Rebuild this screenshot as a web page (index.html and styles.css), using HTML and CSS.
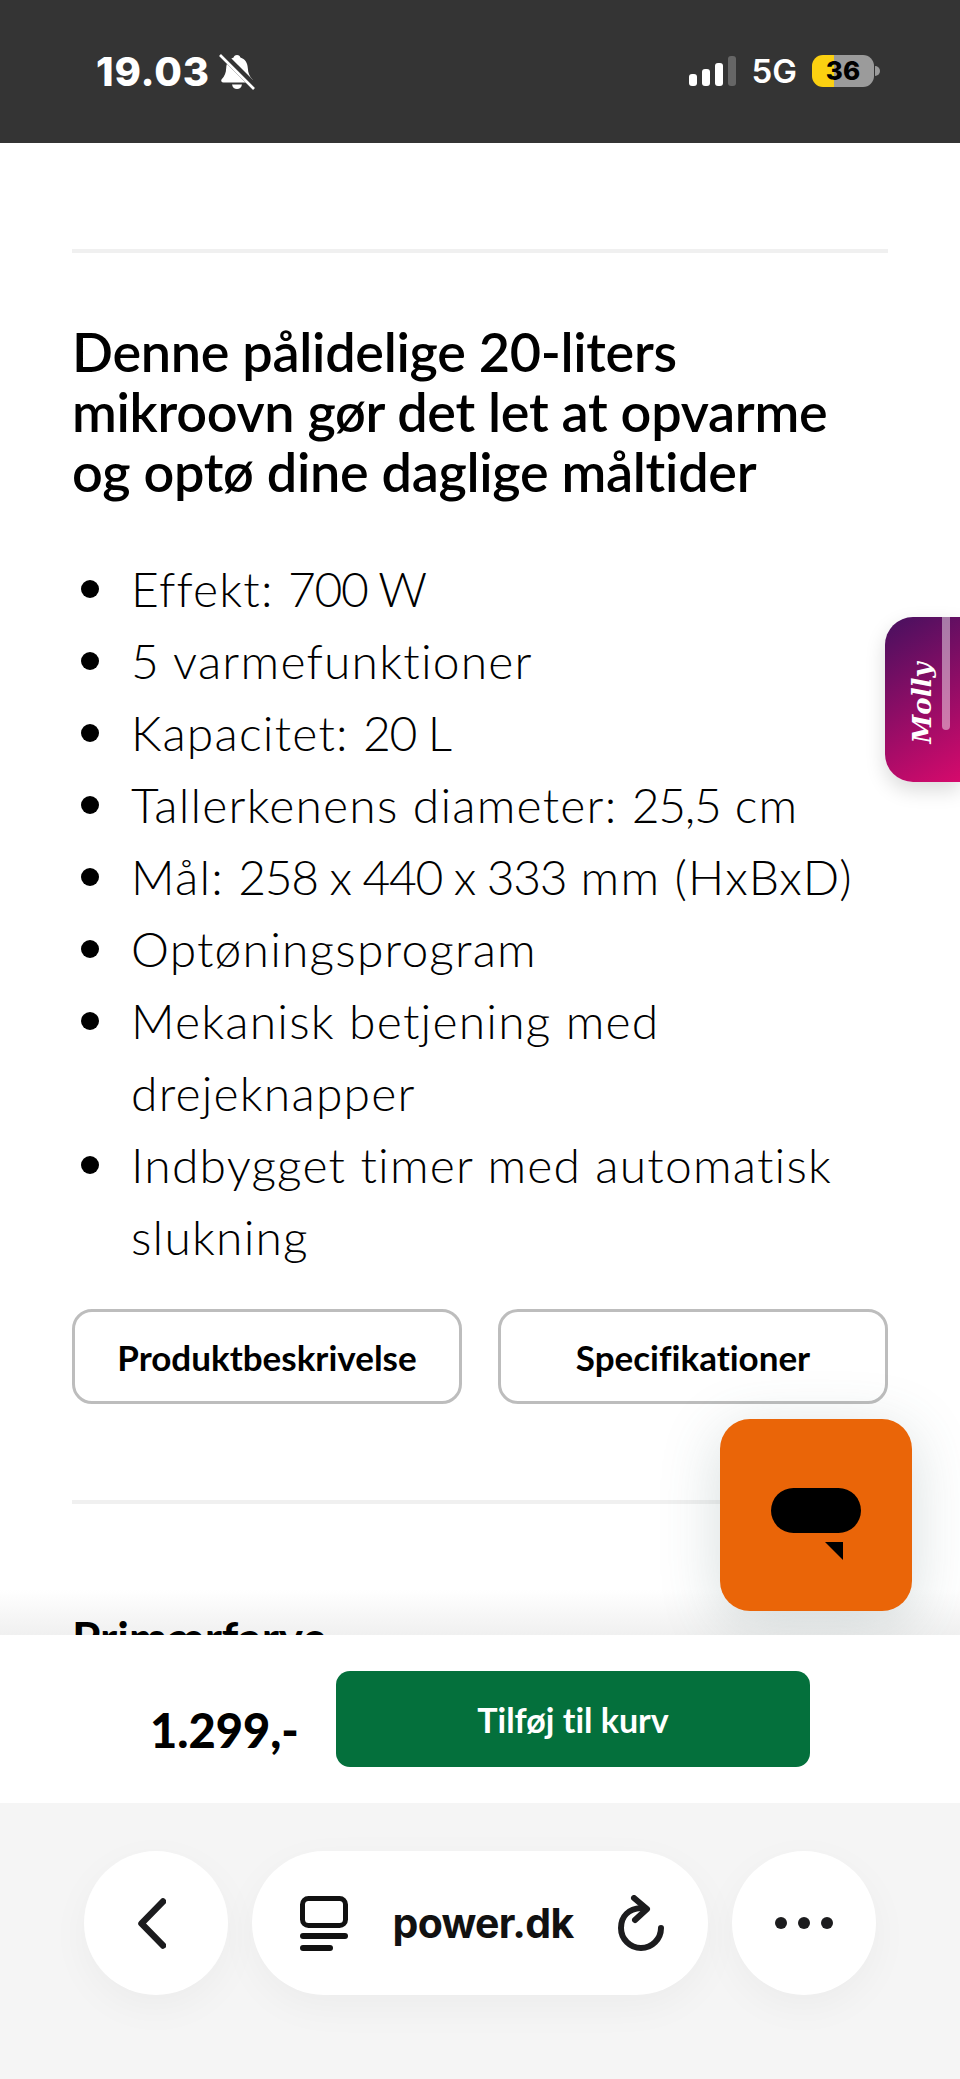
FILE: index.html
```html
<!DOCTYPE html>
<html lang="da">
	<head>
		<meta charset="utf-8">
		<title>Mikroovn - power.dk</title>
		<meta name="viewport" content="width=device-width, initial-scale=1.0">
		<link rel="stylesheet" href="styles.css">
	</head>
	<body>
		<header class="status">
			<div class="status-left">
				<span class="time">19.03</span>
				<svg class="bell" viewBox="0 0 36 36" width="36" height="36">
					<path d="M18 1c2 0 3 1 3.400 2.600C26 5 28.500 9 28.800 14c.3 5 1.500 8 4.700 11.500.8 1.500 0 3-2 3H4.500c-2 0-2.800-1.500-2-3C5.700 22 7 19 7.200 14 7.500 9 10 5 14.600 3.600 15 2 16 1 18 1z" fill="#fff"/>
					<path d="M13 30.500h10c-.5 3-2.500 4.500-5 4.500s-4.500-1.500-5-4.500z" fill="#fff"/>
					<path d="M3 0l33 33" stroke="#343434" stroke-width="7"/>
					<path d="M1 1l34 34" stroke="#fff" stroke-width="2.600"/>
				</svg>
			</div>
			<div class="status-right">
				<div class="signal">
					<i class="bar bar1"></i>
					<i class="bar bar2"></i>
					<i class="bar bar3"></i>
					<i class="bar bar4"></i>
				</div>
				<span class="net">5G</span>
				<div class="battery"><span>36</span></div>
				<i class="battery-cap"></i>
			</div>
		</header>

		<main class="content">
			<hr class="rule rule-top">
			<h2 class="title">Denne pålidelige 20-liters<br>mikroovn gør det let at opvarme<br>og optø dine daglige måltider</h2>
			<ul class="specs">
				<li><span>Effekt: <span class="num">700 W</span></span></li>
				<li>5 varmefunktioner</li>
				<li><span>Kapacitet: <span class="num">20 L</span></span></li>
				<li><span>Tallerkenens diameter: <span class="num">25,5</span> cm</span></li>
				<li><span>Mål: <span class="num">258 x 440 x 333</span> mm (HxBxD)</span></li>
				<li>Optøningsprogram</li>
				<li>Mekanisk betjening med drejeknapper</li>
				<li>Indbygget timer med automatisk slukning</li>
			</ul>
			<div class="tabs">
				<button class="tab">Produktbeskrivelse</button>
				<button class="tab">Specifikationer</button>
			</div>
			<hr class="rule rule-bottom">
			<h3 class="color-title">Primærfarve</h3>

			<div class="fade"></div>
			<a class="molly"><span>Molly</span></a>
			<button class="chat">
				<svg viewBox="0 0 90 72" width="90" height="72">
					<rect x="0" y="0" width="90" height="45" rx="22.500" fill="#000"/>
					<path d="M54 54h18v18z" fill="#000"/>
				</svg>
			</button>
		</main>

		<section class="buybar">
			<span class="price">1.299,-</span>
			<button class="add">Tilføj til kurv</button>
		</section>

		<nav class="browser">
			<button class="round back">
				<svg viewBox="0 0 28 51" width="28" height="51">
					<path d="M25 3.500L3.500 25.500 25 47.500" fill="none" stroke="#1c1c1e" stroke-width="6.500" stroke-linecap="round" stroke-linejoin="round"/>
				</svg>
			</button>
			<div class="address">
				<svg viewBox="0 0 48 55" width="48" height="55">
					<rect x="2.500" y="2.500" width="43" height="27" rx="6" fill="none" stroke="#111" stroke-width="5"/>
					<rect x="0" y="37" width="48" height="6" rx="3" fill="#111"/>
					<rect x="0" y="49" width="33" height="6" rx="3" fill="#111"/>
				</svg>
				<span class="host">power.dk</span>
				<svg viewBox="0 0 46 56" width="46" height="56">
					<path d="M23 13C11 14 3 21 3 33c0 11 9 20 20 20s20-9 20-20" fill="none" stroke="#1c1c1e" stroke-width="6" stroke-linecap="round"/>
					<path d="M16 3l13 11-12 11" fill="none" stroke="#1c1c1e" stroke-width="6" stroke-linecap="round" stroke-linejoin="round"/>
				</svg>
			</div>
			<button class="round">
				<svg viewBox="0 0 58 12" width="58" height="12">
					<circle cx="6" cy="6" r="6" fill="#1c1c1e"/>
					<circle cx="29" cy="6" r="6" fill="#1c1c1e"/>
					<circle cx="52" cy="6" r="6" fill="#1c1c1e"/>
				</svg>
			</button>
		</nav>
	</body>
</html>
```

FILE: styles.css
```css
* {
	box-sizing: border-box;
}
body {
	margin: 0;
	height: 2079px;
	display: flex;
	flex-direction: column;
	overflow: hidden;
	font-family: Lato, "Liberation Sans", sans-serif;
	font-variant-ligatures: none;
	color: #000;
	background-color: #FFF;
}
button {
	font-family: inherit;
	font-variant-ligatures: none;
	border: 0;
	padding: 0;
}

/* phone status bar */
.status {
	height: 143px;
	flex: none;
	background-color: #343434;
	color: #FFF;
	font-family: Inter, "Liberation Sans", sans-serif;
	display: flex;
	justify-content: space-between;
	padding: 54px 80px 0 96px;
}
.status-left {
	display: flex;
	align-items: flex-start;
	gap: 9px;
	height: 36px;
}
.time {
	font-size: 40px;
	font-weight: 800;
	line-height: 36px;
	letter-spacing: 0.8px;
}
.status-right {
	display: flex;
	align-items: flex-start;
	height: 34px;
}
.signal {
	display: flex;
	align-items: flex-end;
	gap: 5px;
	height: 32px;
	width: 47px;
}
.bar {
	width: 8px;
	background-color: #FFF;
	border-radius: 3px;
}
.bar1 { height: 12px; }
.bar2 { height: 17px; }
.bar3 { height: 23px; }
.bar4 { height: 30px; background-color: #666; }
.net {
	font-size: 33px;
	font-weight: 600;
	line-height: 33px;
	margin: 1px 15px 0 16px;
}
.battery {
	width: 62px;
	height: 32px;
	margin-top: 1px;
	border-radius: 11px;
	background: linear-gradient(to right, #fbd011 22px, #9b9b9b 22px);
	color: #000;
	font-size: 26px;
	font-weight: 800;
	line-height: 32px;
	text-align: center;
}
.battery-cap {
	width: 5px;
	height: 10px;
	margin: 12px 0 0 1px;
	background-color: #9b9b9b;
	border-radius: 0 5px 5px 0;
}

/* product text */
.content {
	flex: 1;
	min-height: 0;
	position: relative;
	overflow: hidden;
	padding: 0 72px;
}
.rule {
	border: 0;
	margin: 0;
	height: 4px;
	background-color: #f0f0f0;
}
.rule-top {
	margin-top: 106px;
}
.title {
	font-size: 54px;
	font-weight: 600;
	line-height: 60px;
	margin: 69px 0 0;
	white-space: nowrap;
	letter-spacing: -0.3px;
}
.specs {
	list-style: none;
	margin: 51px 0 0;
	padding: 0;
	font-size: 48px;
	font-weight: 300;
	line-height: 72px;
	letter-spacing: 1.2px;
}
.specs li {
	display: grid;
	grid-template-columns: 59px 1fr;
}
.specs li::before {
	content: "";
	width: 18px;
	height: 18px;
	margin: 27px 0 0 9px;
	border-radius: 50%;
	background-color: #000;
}
.num {
	letter-spacing: -1.3px;
}
.tabs {
	display: flex;
	gap: 36px;
	margin-top: 36px;
}
.tab {
	flex: 1;
	height: 95px;
	background-color: #FFF;
	border: 3px solid #bdbdbd;
	border-radius: 20px;
	font-size: 35px;
	font-weight: 700;
	color: #000;
}
.rule-bottom {
	margin-top: 96px;
}
.color-title {
	position: relative;
	z-index: 1;
	font-size: 46px;
	font-weight: 700;
	line-height: 50px;
	margin: 109px 0 0;
}
.fade {
	position: absolute;
	left: 0;
	right: 0;
	bottom: 0;
	height: 45px;
	background: linear-gradient(to bottom, rgba(225, 225, 225, 0), rgba(225, 225, 225, 0.5));
}

/* floating widgets */
.molly {
	position: absolute;
	top: 474px;
	right: 0;
	width: 75px;
	height: 165px;
	border-radius: 28px 0 0 28px;
	background: linear-gradient(150deg, #46105f, #d60a6c);
	box-shadow: 0 8px 20px rgba(0, 0, 0, 0.15);
	display: flex;
	align-items: center;
	justify-content: center;
	overflow: hidden;
}
.molly::after {
	content: "";
	position: absolute;
	top: 0;
	left: 57px;
	width: 8px;
	height: 113px;
	border-radius: 0 0 4px 4px;
	background-color: rgba(255, 255, 255, 0.45);
}
.molly span {
	transform: rotate(-90deg) translateX(-3px);
	font-family: "DejaVu Serif", serif;
	font-style: italic;
	font-weight: 700;
	font-size: 26px;
	color: #FFF;
	position: relative;
	z-index: 1;
}
.chat {
	position: absolute;
	top: 1276px;
	left: 720px;
	width: 192px;
	height: 192px;
	border-radius: 30px;
	background-color: #ea6508;
	box-shadow: 0 12px 60px rgba(70, 100, 100, 0.22);
	display: flex;
	justify-content: center;
	padding-top: 69px;
}

/* sticky buy bar */
.buybar {
	height: 168px;
	flex: none;
	background-color: #FFF;
	position: relative;
	display: flex;
	align-items: center;
	padding-left: 150px;
	gap: 38px;
}
.price {
	width: 148px;
	font-size: 47px;
	font-weight: 900;
	white-space: nowrap;
	margin-top: 22px;
}
.add {
	width: 474px;
	height: 96px;
	background-color: #04703c;
	color: #FFF;
	border-radius: 14px;
	font-size: 34px;
	font-weight: 700;
}

/* safari toolbar */
.browser {
	height: 276px;
	flex: none;
	background-color: #f5f5f5;
	display: flex;
	gap: 24px;
	padding: 48px 84px 0;
}
.round {
	width: 144px;
	height: 144px;
	flex: none;
	border-radius: 50%;
	background-color: #FFF;
	box-shadow: 0 12px 40px rgba(0, 0, 0, 0.04);
	display: flex;
	align-items: center;
	justify-content: center;
}
.back svg {
	margin-right: 9px;
}
.address {
	flex: 1;
	height: 144px;
	border-radius: 72px;
	background-color: #FFF;
	box-shadow: 0 12px 40px rgba(0, 0, 0, 0.04);
	display: flex;
	align-items: center;
	justify-content: space-between;
	padding: 0 44px 0 48px;
}
.host {
	font-family: Inter, "Liberation Sans", sans-serif;
	font-size: 41px;
	font-weight: 700;
	color: #111;
	letter-spacing: -0.7px;
}
```
